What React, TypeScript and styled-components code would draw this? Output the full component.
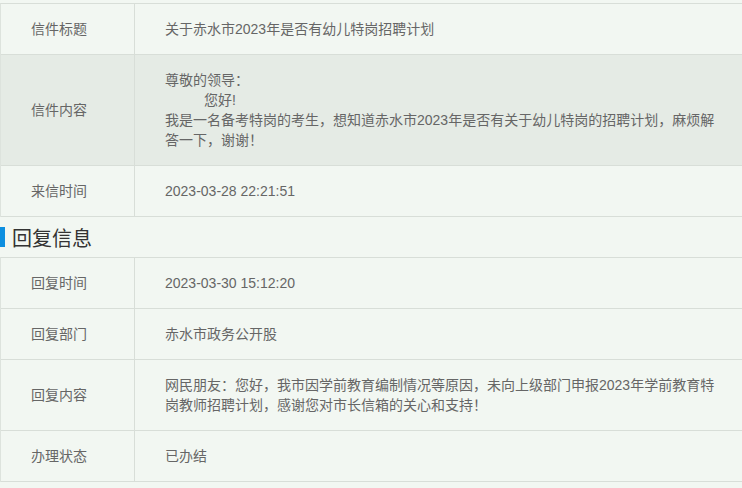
import styled, { createGlobalStyle } from 'styled-components'

const GlobalStyle = createGlobalStyle`
  html, body {
    margin: 0;
    padding: 0;
    background: #f2f7f2;
  }
  body {
    font-family: "Liberation Sans", "Noto Sans CJK SC", sans-serif;
    color: #666;
  }
`

const Page = styled.div`
  width: 742px;
  height: 488px;
  overflow: hidden;
  padding-top: 3px;
  box-sizing: border-box;
`

const Table = styled.div`
  border-top: 1px solid #d8ded8;
  border-left: 1px solid #dde3dd;
`

const Row = styled.div<{ $shaded?: boolean }>`
  display: grid;
  grid-template-columns: 134px 1fr;
  border-bottom: 1px solid #d8ded8;
  background: ${p => (p.$shaded ? '#e5ebe5' : '#f2f7f2')};
`

const Label = styled.div`
  display: flex;
  align-items: center;
  padding-left: 30px;
  font-size: 14px;
  line-height: 20px;
  border-right: 1px solid #d8ded8;
`

const Value = styled.div`
  padding: 15px 20px 15px 30px;
  font-size: 14px;
  line-height: 20px;
`

const Line = styled.div<{ $indent?: number }>`
  padding-left: ${p => p.$indent ?? 0}px;
`

const SectionTitle = styled.h2`
  display: flex;
  align-items: center;
  gap: 7px;
  margin: 0;
  height: 40px;
  font-size: 20px;
  font-weight: normal;
  color: #333;
  &::before {
    content: '';
    width: 5px;
    height: 20px;
    background: #0d8fe0;
  }
`

type Item = { label: string; lines: { text: string; indent?: number }[]; shaded?: boolean }

const letter: Item[] = [
  { label: '信件标题', lines: [{ text: '关于赤水市2023年是否有幼儿特岗招聘计划' }] },
  {
    label: '信件内容',
    shaded: true,
    lines: [
      { text: '尊敬的领导：' },
      { text: '您好!', indent: 39 },
      { text: '我是一名备考特岗的考生，想知道赤水市2023年是否有关于幼儿特岗的招聘计划，麻烦解答一下，谢谢！' }
    ]
  },
  { label: '来信时间', lines: [{ text: '2023-03-28 22:21:51' }] }
]

const reply: Item[] = [
  { label: '回复时间', lines: [{ text: '2023-03-30 15:12:20' }] },
  { label: '回复部门', lines: [{ text: '赤水市政务公开股' }] },
  {
    label: '回复内容',
    lines: [{ text: '网民朋友：您好，我市因学前教育编制情况等原因，未向上级部门申报2023年学前教育特岗教师招聘计划，感谢您对市长信箱的关心和支持！' }]
  },
  { label: '办理状态', lines: [{ text: '已办结' }] }
]

const InfoTable = ({ items }: { items: Item[] }) => (
  <Table>
    {items.map(item => (
      <Row key={item.label} $shaded={item.shaded}>
        <Label>{item.label}</Label>
        <Value>
          {item.lines.map((l, i) => (
            <Line key={i} $indent={l.indent}>{l.text}</Line>
          ))}
        </Value>
      </Row>
    ))}
  </Table>
)

export default function App() {
  return (
    <Page>
      <GlobalStyle />
      <InfoTable items={letter} />
      <SectionTitle>回复信息</SectionTitle>
      <InfoTable items={reply} />
    </Page>
  )
}
